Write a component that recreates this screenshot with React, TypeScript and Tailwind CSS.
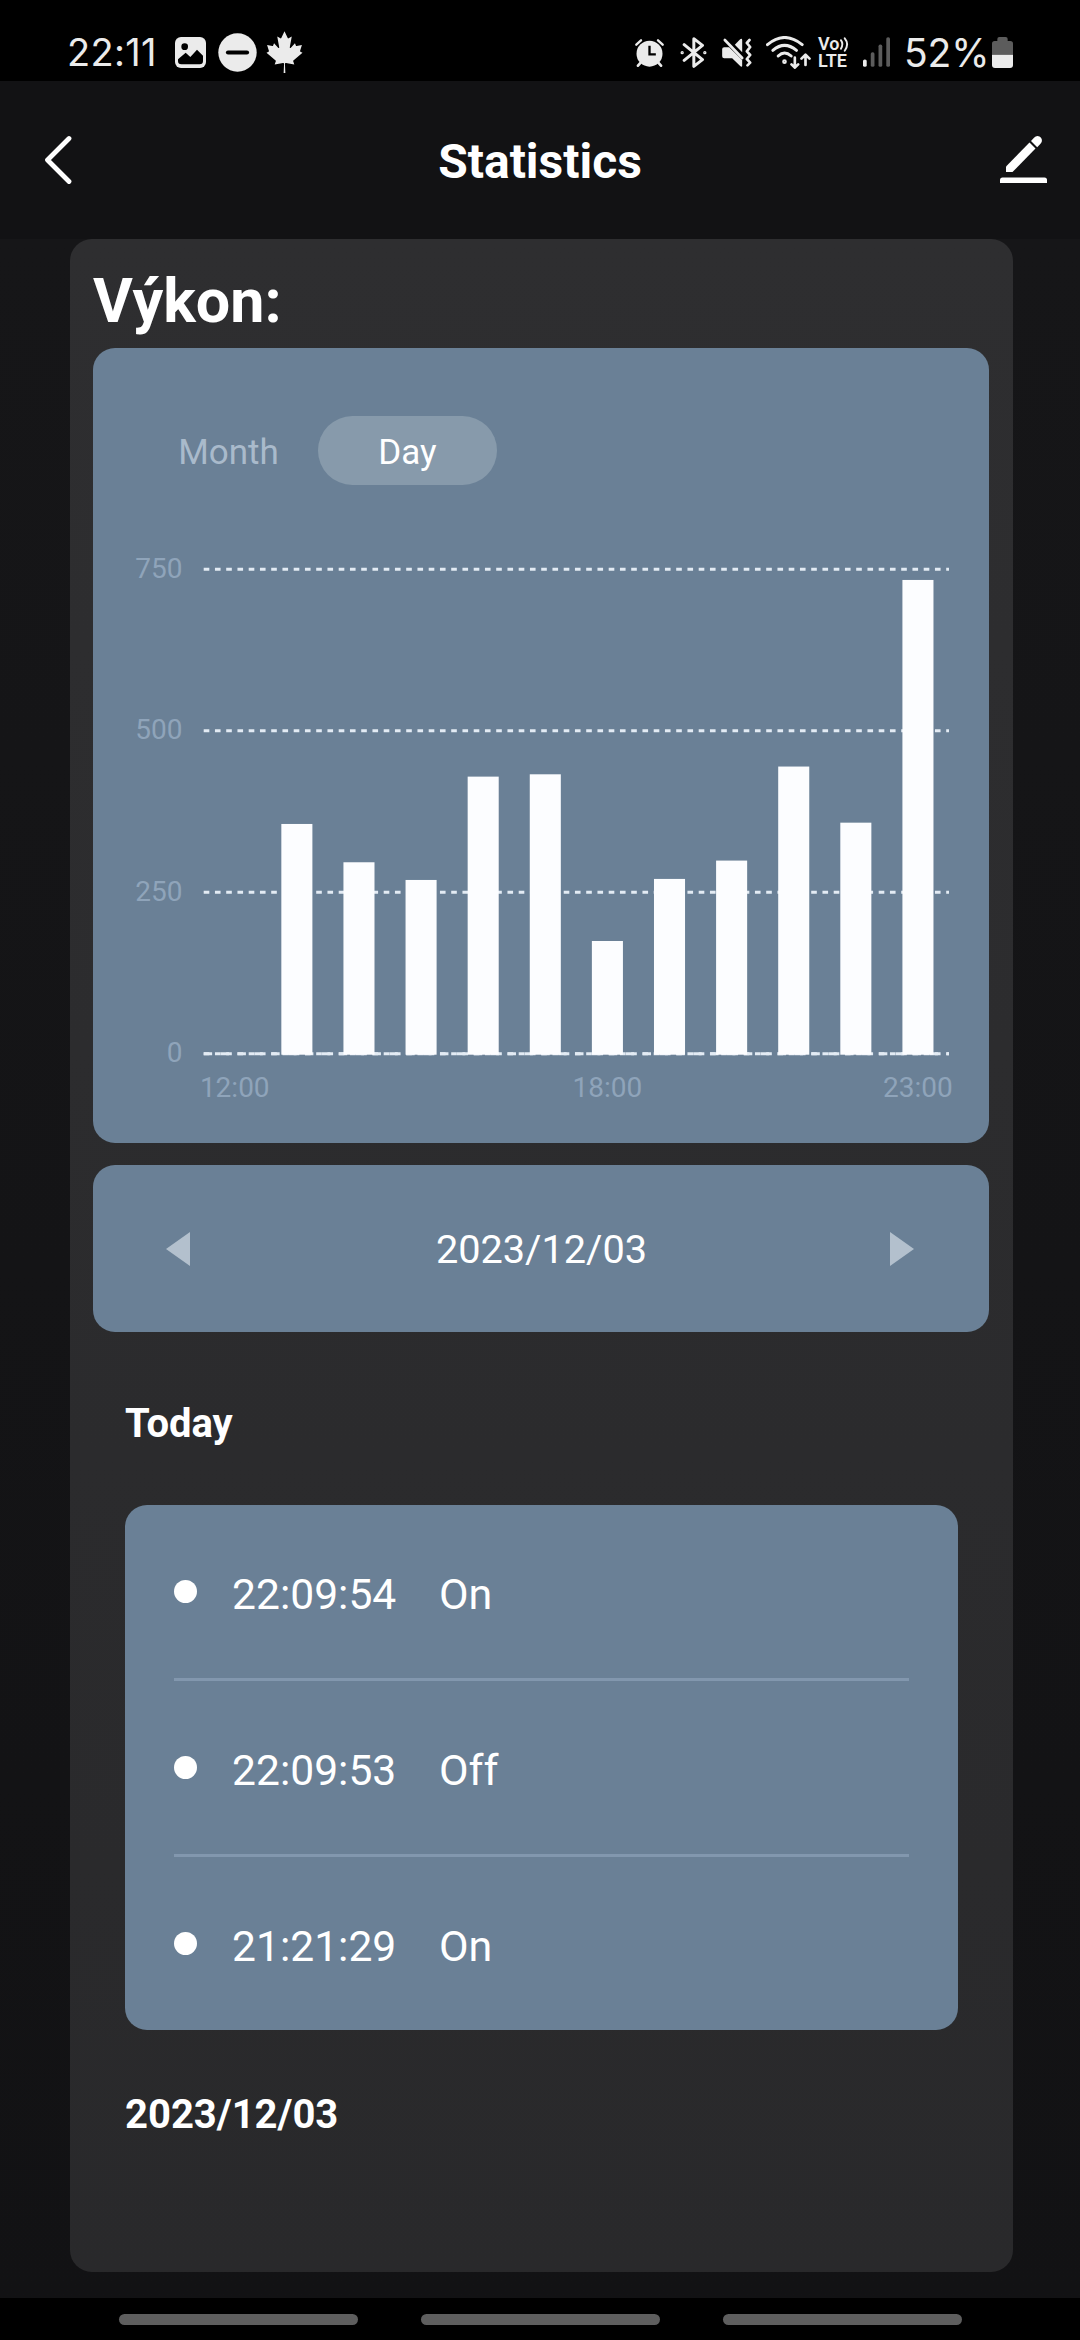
import { useState } from "react";

interface Reading {
    hour: string;
    value: number;
    showLabel?: boolean;
}

interface LogEntry {
    time: string;
    state: string;
}

const readings: Reading[] = [
    { hour: "12:00", value: 0, showLabel: true },
    { hour: "13:00", value: 355.7 },
    { hour: "14:00", value: 296.4 },
    { hour: "15:00", value: 269 },
    { hour: "16:00", value: 429 },
    { hour: "17:00", value: 432.6 },
    { hour: "18:00", value: 174.5, showLabel: true },
    { hour: "19:00", value: 270.6 },
    { hour: "20:00", value: 299 },
    { hour: "21:00", value: 444.6 },
    { hour: "22:00", value: 357.7 },
    { hour: "23:00", value: 733.5, showLabel: true },
];

const log: LogEntry[] = [
    { time: "22:09:54", state: "On" },
    { time: "22:09:53", state: "Off" },
    { time: "21:21:29", state: "On" },
];

function StatusBar() {
    return (
        <div className="h-[81px] bg-black pt-[23px] pl-[67px] pr-[67px] flex items-center justify-between text-[#ebebeb] font-['Inter',sans-serif]">
            <div className="flex items-center">
                <span className="w-[108px] text-[38px] leading-none tracking-[0.3px]">22:11</span>
                <svg className="w-[31px] h-[31px]" viewBox="0 0 93 93">
                    <rect width="93" height="93" rx="18" fill="currentColor" />
                    <circle cx="29" cy="29" r="10" fill="#000" />
                    <path d="M9 67 L32 47 L46 60 L66 38 L84 56 V72 Q84 82 74 82 H19 Q9 82 9 72 Z" fill="#000" />
                </svg>
                <svg className="w-[39px] h-[39px] ml-3" viewBox="0 0 39 39">
                    <circle cx="19.5" cy="19.5" r="19.2" fill="currentColor" />
                    <path d="M10 19.5 H29" stroke="#000" strokeWidth="4.2" strokeLinecap="round" />
                </svg>
                <svg className="w-[39px] h-[42px] ml-2" viewBox="-2015 -2030 4030 4060" preserveAspectRatio="none" fill="currentColor">
                    <path d="M-90 2030l45-863a95 95 0 0 0-111-98l-859 151 116-320a65 65 0 0 0-20-73l-941-762 212-99a65 65 0 0 0 34-79l-186-572 542 115a65 65 0 0 0 73-38l105-247 423 454a65 65 0 0 0 111-57l-204-1052 327 189a65 65 0 0 0 91-27l332-652 332 652a65 65 0 0 0 91 27l327-189-204 1052a65 65 0 0 0 111 57l423-454 105 247a65 65 0 0 0 73 38l542-115-186 572a65 65 0 0 0 34 79l212 99-941 762a65 65 0 0 0-20 73l116 320-859-151a95 95 0 0 0-111 98l45 863z" />
                </svg>
            </div>
            <div className="flex items-center">
                {/* alarm */}
                <svg className="w-[29px] h-[29px]" viewBox="0 0 87 87" fill="none" stroke="currentColor" strokeLinecap="round">
                    <circle cx="43.5" cy="47" r="39" fill="currentColor" stroke="none" />
                    <path d="M4 20 L18 7 M83 20 L69 7" strokeWidth="7" />
                    <path d="M17 74 L9 83 M70 74 L78 83" strokeWidth="8" />
                    <path d="M43.5 27 V49 H59" stroke="#000" strokeWidth="7" strokeLinecap="square" />
                </svg>
                {/* bluetooth */}
                <svg className="w-[27px] h-[31px] ml-[16px]" viewBox="0 0 80 93" fill="none" stroke="currentColor" strokeWidth="9" strokeLinecap="round" strokeLinejoin="round">
                    <path d="M12 23 L67 68 L41 88 V5 L67 25 L12 70" />
                    <circle cx="6" cy="47" r="2" strokeWidth="6" />
                    <circle cx="74" cy="47" r="2" strokeWidth="6" />
                </svg>
                {/* muted, vibrating */}
                <svg className="w-[31px] h-[29px] ml-[15px]" viewBox="0 0 92 87">
                    <path d="M0 33 Q0 28 6 28 H21 L60 66 V84 Q59 88 54 84 L30 61 H6 Q0 61 0 55 Z" fill="currentColor" />
                    <path d="M38 20 L54 4 Q60 0 60 7 V43 Z" fill="currentColor" />
                    <path d="M8 6 L60 60" stroke="currentColor" strokeWidth="8" strokeLinecap="round" />
                    <path d="M82 6 L74 15 L84 27 L74 40 L84 51 L74 63 L84 74 L76 82" fill="none" stroke="currentColor" strokeWidth="8" strokeLinecap="round" strokeLinejoin="round" />
                </svg>
                {/* wifi with traffic arrows */}
                <svg className="w-[45px] h-[33px] ml-[13px]" viewBox="0 0 134 99" fill="none" stroke="currentColor" strokeWidth="9" strokeLinecap="round" strokeLinejoin="round">
                    <path d="M4 26 Q55 -17 108 26" />
                    <path d="M20 43 Q55 13 91 43" />
                    <path d="M36 60 Q55 42 75 60" />
                    <circle cx="55" cy="77" r="4" strokeWidth="6" />
                    <path d="M86 65 V94 M76 85 L86 95 L96 85" strokeWidth="8" />
                    <path d="M118 87 V58 M106 68 L118 56 L130 68" strokeWidth="8" />
                </svg>
                <div className="w-[32px] ml-[7px] flex flex-col gap-[1px] text-[18px] leading-[16px] font-semibold font-['Roboto',sans-serif]">
                    <span className="flex items-center">
                        Vo
                        <svg className="w-[11px] h-[16px]" viewBox="0 0 11 16" fill="none" stroke="currentColor" strokeWidth="2" strokeLinecap="round">
                            <path d="M2 4 Q5 8 2 13" />
                            <path d="M6 2 Q11 8 6 15" />
                        </svg>
                    </span>
                    <span>LTE</span>
                </div>
                {/* signal */}
                <svg className="w-[27px] h-[30px] ml-[13px]" viewBox="0 0 80 88">
                    <rect x="0" y="66" width="11" height="22" rx="5" fill="currentColor" />
                    <rect x="23" y="45" width="11" height="43" rx="5" fill="#5c5c5c" />
                    <rect x="46" y="22" width="11" height="66" rx="5" fill="#5c5c5c" />
                    <rect x="69" y="0" width="11" height="88" rx="5" fill="#5c5c5c" />
                </svg>
                <span className="w-[88px] ml-[14px] text-[39px] leading-none tracking-[-0.1px] whitespace-nowrap">52%</span>
                {/* battery */}
                <svg className="w-[21px] h-[31px]" viewBox="0 0 63 93">
                    <path d="M0 53 V20 Q0 12 8 12 H16 V6 Q16 0 22 0 H41 Q47 0 47 6 V12 H55 Q63 12 63 20 V53 Z" fill="#5c5c5c" />
                    <path d="M0 53 H63 V84 Q63 93 54 93 H9 Q0 93 0 84 Z" fill="currentColor" />
                </svg>
            </div>
        </div>
    );
}

function Header() {
    return (
        <header className="h-[158px] bg-[#121214] pl-[42px] pr-[31px] flex items-center justify-between">
            <button aria-label="Back" className="w-[66px]">
                <svg className="w-[30px] h-[52px]" viewBox="0 0 30 52" fill="none" stroke="#fff" strokeWidth="4.8" strokeLinecap="round" strokeLinejoin="round">
                    <path d="M27 4.5 L5.5 26 L27 47.5" />
                </svg>
            </button>
            <h1 className="text-[48px] font-bold leading-none pt-[3px]">Statistics</h1>
            <button aria-label="Edit" className="w-[77px] flex justify-end">
                <svg className="w-[51px] h-[50px]" viewBox="12 15 51 50" fill="#fff">
                    <path d="M20 52 V46.5 L43.5 22.5 L49.5 28.5 L26.5 52 Z" />
                    <path d="M45 21 L48 17.8 Q50.5 15 53.5 16.5 Q56.5 18.5 55.8 21.5 Q55.5 23 51.2 27.2 Z" />
                    <path d="M14 63 V60 Q14 57.5 16.5 57.5 H58.5 Q61 57.5 61 60 V63 Z" />
                </svg>
            </button>
        </header>
    );
}

function PowerChart() {
    const left = 110.7;
    const right = 856;
    const zero = 568.7;
    const slot = (right - left) / readings.length;
    const toY = (value: number) => zero - (value * 484.4) / 750;

    return (
        <svg className="block w-[896px] h-[658px]" viewBox="0 0 896 658">
            {[750, 500, 250, 0].map((tick) => (
                <g key={tick}>
                    <line x1={left} x2={right} y1={toY(tick)} y2={toY(tick)} stroke="#e3ebf4" strokeWidth="3" strokeDasharray="5.625 5.625" />
                    <text x="89.5" y={toY(tick) + 8.5} textAnchor="end" fontSize="28" fill="#8fa4ba">
                        {tick}
                    </text>
                </g>
            ))}
            <line x1={left} x2={right} y1={zero} y2={zero} stroke="#e3ebf4" strokeWidth="3" strokeDasharray="8.44 8.44" />
            {readings.map((r, i) => (
                <g key={r.hour}>
                    {r.value > 0 && (
                        <rect x={left + slot * (i + 0.25)} y={toY(r.value)} width={slot / 2} height={zero + 1 - toY(r.value)} fill="#fcfdff" />
                    )}
                    {r.showLabel && (
                        <text x={left + slot * (i + 0.5)} y="611.5" textAnchor="middle" fontSize="28" fill="#8fa4ba">
                            {r.hour}
                        </text>
                    )}
                </g>
            ))}
        </svg>
    );
}

export default function App() {
    const [range, setRange] = useState("Day");

    return (
        <div className="w-[1080px] h-[2340px] flex flex-col bg-black text-white font-['Roboto',sans-serif]">
            <StatusBar />
            <Header />

            <main className="h-[2059px] pl-[70px] pr-[67px] bg-gradient-to-b from-[#161618] to-[#121214]">
                <div className="h-[2033px] pl-[23px] pr-[24px] rounded-[22px] bg-gradient-to-b from-[#2e2e30] to-[#29292b]">
                    <h2 className="h-[109px] pt-4 flex items-center text-[61px] font-bold">Výkon:</h2>

                    <section className="h-[795px] pt-[68px] rounded-[22px] bg-[#6a8096]">
                        <div className="pl-[46px] flex text-[35px]">
                            {["Month", "Day"].map((label) => (
                                <button
                                    key={label}
                                    onClick={() => setRange(label)}
                                    className={`w-[179px] h-[69px] pt-[3px] rounded-full flex items-center justify-center leading-none ${
                                        range === label ? "bg-[#879aab] text-white" : "text-[#a9bacb]"
                                    }`}
                                >
                                    {label}
                                </button>
                            ))}
                        </div>
                        <PowerChart />
                    </section>

                    <section className="h-[167px] mt-[22px] pl-[73px] pr-[75px] rounded-[22px] bg-[#6a8096] flex items-center justify-between">
                        <svg className="w-6 h-[34px]" viewBox="0 0 24 34" fill="#b3c0cd">
                            <path d="M24 0 V34 L0 17 Z" />
                        </svg>
                        <span className="pt-[3px] pl-[3px] text-[39.7px] leading-none">2023/12/03</span>
                        <svg className="w-6 h-[34px]" viewBox="0 0 24 34" fill="#b3c0cd">
                            <path d="M0 0 L24 17 L0 34 Z" />
                        </svg>
                    </section>

                    <div className="pl-[32px] pr-[31px]">
                        <h3 className="h-[173px] pt-[10px] flex items-center text-[40px] font-bold">Today</h3>
                        <ul className="px-[49px] rounded-[22px] bg-[#6a8096]">
                            {log.map((entry) => (
                                <li key={entry.time} className="border-b-[3px] border-[#8297ae] last:border-b-0">
                                    <div className="h-[173px] flex items-center leading-none">
                                        <span className="w-[23px] h-[23px] rounded-full bg-white" />
                                        <span className="w-[207px] pt-[5px] ml-[35px] text-[42.6px]">{entry.time}</span>
                                        <span className="pt-[5px] text-[43px]">{entry.state}</span>
                                    </div>
                                </li>
                            ))}
                        </ul>
                        <h3 className="h-[169px] flex items-center text-[40px] font-bold">2023/12/03</h3>
                    </div>
                </div>
            </main>

            <nav className="h-[42px] pt-4 flex justify-center gap-[63px]">
                {["Recents", "Home", "Back"].map((name) => (
                    <button key={name} aria-label={name} className="w-[239px] h-[11px] rounded-full bg-[#5e5e5e]" />
                ))}
            </nav>
        </div>
    );
}
